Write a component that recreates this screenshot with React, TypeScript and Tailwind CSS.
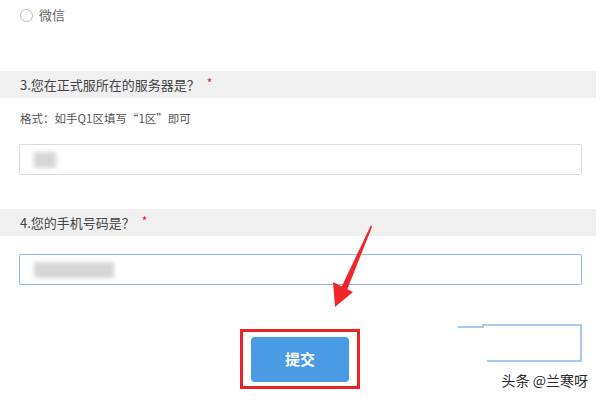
import React from 'react';

const font = { fontFamily: '"Noto Sans CJK SC", "Noto Sans", sans-serif' };

function QuestionBar({ title }: { title: string }) {
  return (
    <div className="w-[596px] h-[27px] bg-[#f0f0f0] flex items-center pl-[20px] text-[13px] text-[#444]">
      <span>{title}</span>
      <span className="text-[#e3262c] ml-[7px] -mt-[3px] text-[12px]">*</span>
    </div>
  );
}

function BlurredInput({ focused, blurWidth }: { focused?: boolean; blurWidth: string }) {
  return (
    <div
      className={
        'ml-[19px] w-[563px] h-[31px] rounded-[2px] bg-white flex items-center pl-[14px] ' +
        (focused ? 'border border-[#8fb9e6]' : 'border border-[#dcdcdc]')
      }
    >
      <div className={'h-[16px] bg-[#d6d6d6] blur-[2px] ' + blurWidth} />
    </div>
  );
}

export default function App() {
  return (
    <div className="relative w-[600px] h-[400px] bg-white overflow-hidden" style={font}>
      <div className="flex flex-col">
        <div className="h-[30px] flex items-center pl-[20px] gap-[6px]">
          <div className="w-[13px] h-[13px] rounded-full border border-[#bdbdbd]" />
          <span className="text-[13px] text-[#666]">微信</span>
        </div>

        <div className="mt-[41px]">
          <QuestionBar title="3.您在正式服所在的服务器是？" />
        </div>
        <div className="pl-[20px] mt-[12px] text-[11.5px] text-[#555]">格式：如手Q1区填写“1区”即可</div>

        <div className="mt-[17px]">
          <BlurredInput blurWidth="w-[22px]" />
        </div>

        <div className="mt-[34px]">
          <QuestionBar title="4.您的手机号码是？" />
        </div>

        <div className="mt-[18px]">
          <BlurredInput focused blurWidth="w-[80px]" />
        </div>

        <div className="mt-[44px] flex justify-center">
          <div className="w-[120px] h-[60px] border-[3px] border-[#e8242b] flex items-center justify-center">
            <button className="w-[98px] h-[45px] rounded-[4px] bg-[#4a9be3] text-white text-[15px] font-bold">
              提交
            </button>
          </div>
        </div>
      </div>

      <svg className="absolute left-0 top-0 pointer-events-none" width="600" height="400">
        <path d="M371 225 L372 227 L347 290 L341 288 Z" fill="#f0262c" />
        <path d="M335 307 L333 282 L353 292 Z" fill="#f0262c" />
        <path
          d="M458 327 H483 V325 H581 V361 H487"
          fill="none"
          stroke="#8fb9e6"
          strokeWidth="1.5"
        />
      </svg>

      <div
        className="absolute right-[12px] bottom-[9px] text-[14px] text-[#2a2a2a]"
        style={{ textShadow: '0 0 2px #fff, 0 0 2px #fff' }}
      >
        头条 @兰寒呀
      </div>
    </div>
  );
}
